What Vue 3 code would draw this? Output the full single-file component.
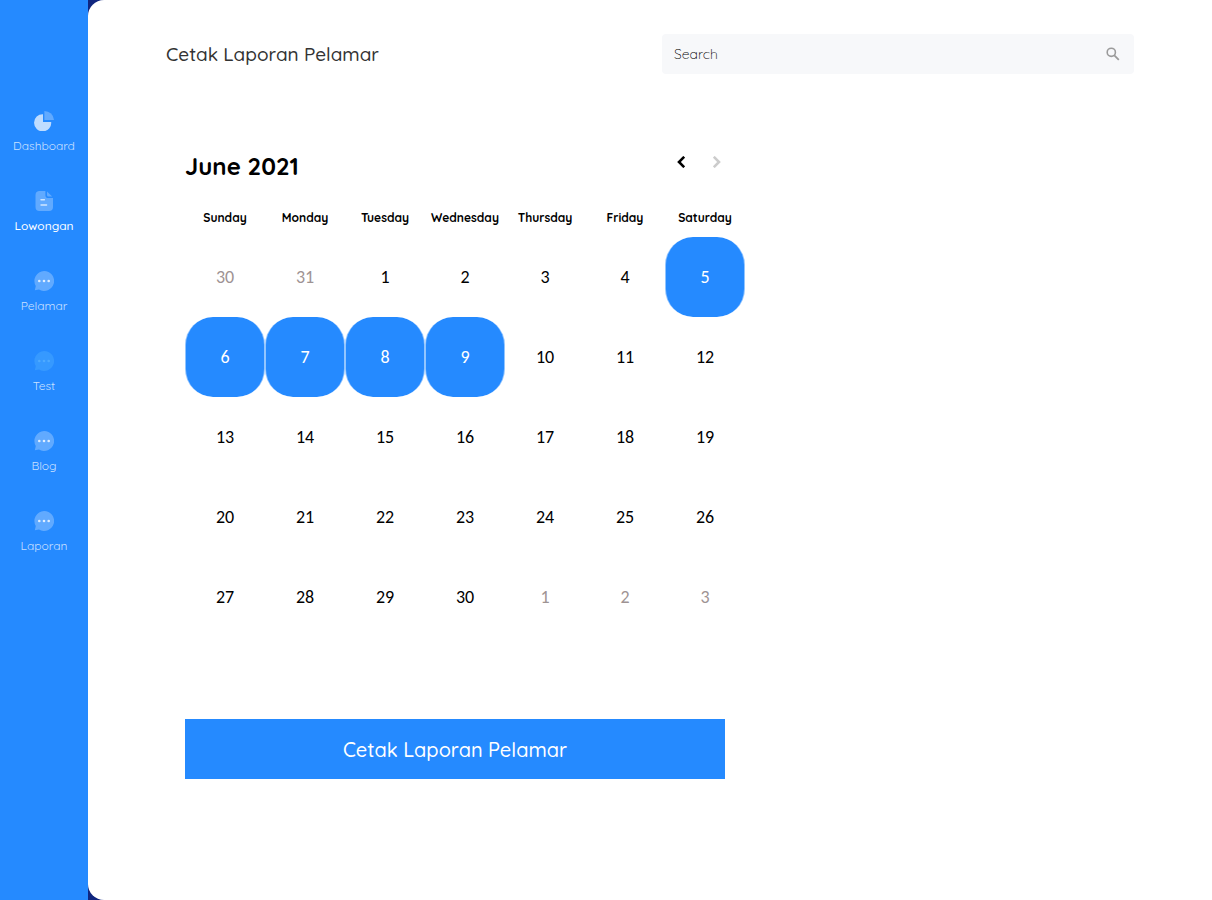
<script setup>
import { ref } from 'vue'

const search = ref('')

const navItems = [
  { label: 'Dashboard', icon: 'pie' },
  { label: 'Lowongan', icon: 'doc', active: true },
  { label: 'Pelamar', icon: 'chat' },
  { label: 'Test', icon: 'chat', faint: true },
  { label: 'Blog', icon: 'chat' },
  { label: 'Laporan', icon: 'chat' },
]

const weekdays = ['Sunday', 'Monday', 'Tuesday', 'Wednesday', 'Thursday', 'Friday', 'Saturday']

// June 2021 starts on a Tuesday; the grid runs from 30 May to 3 July.
const weeks = Array.from({ length: 5 }, (_, w) =>
  Array.from({ length: 7 }, (_, d) => {
    const date = new Date(2021, 4, 30 + w * 7 + d)
    const day = date.getDate()
    const outside = date.getMonth() !== 5
    return { day, outside, selected: !outside && day >= 5 && day <= 9 }
  })
)
</script>

<template>
  <div class="app">
    <nav class="sidebar" aria-label="Menu">
      <a
        v-for="item in navItems"
        :key="item.label"
        href="#"
        class="nav-item"
        :class="{ active: item.active }"
      >
        <svg v-if="item.icon === 'pie'" class="nav-icon" viewBox="0 0 20 20" aria-hidden="true">
          <path d="M9 3.2V11h8.2A8.6 8.6 0 1 1 9 3.2Z" fill="#fff" fill-opacity=".7" />
          <path d="M10.4 0A9.6 9.6 0 0 1 20 9h-9.6Z" fill="#fff" fill-opacity=".28" />
        </svg>
        <svg v-else-if="item.icon === 'doc'" class="nav-icon" viewBox="0 0 20 20" aria-hidden="true">
          <path
            d="M5 0h6.4v4.2A2.8 2.8 0 0 0 14.2 7H19v9a4 4 0 0 1-4 4H5.500a4 4 0 0 1-4-4V4A4 4 0 0 1 5 0Z"
            fill="#fff"
            fill-opacity=".28"
          />
          <path d="M13 0.500 18.200 5.500H14.500A1.500 1.500 0 0 1 13 4Z" fill="#fff" fill-opacity=".28" />
          <path d="M7 8.800h3.400M7 14h5.600" stroke="#fff" stroke-opacity=".7" stroke-width="1.400" stroke-linecap="round" />
        </svg>
        <svg v-else class="nav-icon" :class="{ faint: item.faint }" viewBox="0 0 20 20" aria-hidden="true">
          <path class="bubble" d="M10 0a10 10 0 1 1-5 18.600L.8 19.200l1-4.100A10 10 0 0 1 10 0Z" />
          <g class="dots">
            <circle cx="5.300" cy="10" r="1.300" />
            <circle cx="10" cy="10" r="1.300" />
            <circle cx="14.700" cy="10" r="1.300" />
          </g>
        </svg>
        <span>{{ item.label }}</span>
      </a>
    </nav>

    <main class="content">
      <header class="topbar">
        <h1>Cetak Laporan Pelamar</h1>
        <form class="search" role="search" @submit.prevent>
          <input v-model="search" type="search" placeholder="Search" aria-label="Search" />
          <button type="submit" aria-label="Submit search">
            <svg viewBox="0 0 14 14" width="14" height="14" aria-hidden="true">
              <circle cx="5.300" cy="5.300" r="4.100" fill="none" stroke="#9b9b9b" stroke-width="1.600" />
              <path d="m8.300 8.300 4.500 4.500" stroke="#9b9b9b" stroke-width="1.800" />
            </svg>
          </button>
        </form>
      </header>

      <section class="calendar" aria-label="Calendar">
        <div class="calendar-head">
          <h2>June 2021</h2>
          <div class="pager">
            <button type="button" aria-label="Previous month">
              <svg viewBox="0 0 8 12" width="8" height="12" aria-hidden="true">
                <path d="M7.200 .800 2 6l5.200 5.200" fill="none" stroke="currentColor" stroke-width="2.600" />
              </svg>
            </button>
            <button type="button" aria-label="Next month" disabled>
              <svg viewBox="0 0 8 12" width="8" height="12" aria-hidden="true">
                <path d="m.800 .800 5.200 5.200-5.200 5.200" fill="none" stroke="currentColor" stroke-width="2.600" />
              </svg>
            </button>
          </div>
        </div>

        <table>
          <thead>
            <tr>
              <th v-for="name in weekdays" :key="name" scope="col">{{ name }}</th>
            </tr>
          </thead>
          <tbody>
            <tr v-for="(week, w) in weeks" :key="w">
              <td v-for="(cell, d) in week" :key="d">
                <button
                  type="button"
                  class="day"
                  :class="{ outside: cell.outside, selected: cell.selected }"
                  :aria-pressed="cell.selected"
                >
                  {{ cell.day }}
                </button>
              </td>
            </tr>
          </tbody>
        </table>
      </section>

      <button type="button" class="print">Cetak Laporan Pelamar</button>
    </main>
  </div>
</template>

<style>
body {
  margin: 0;
}
</style>

<style scoped>
.app {
  display: flex;
  min-height: 100vh;
  background: #10267f;
  font-family: Quicksand, Lato, sans-serif;
}

button {
  padding: 0;
  border: 0;
  background: none;
  font: inherit;
  color: inherit;
  cursor: pointer;
}

.sidebar {
  display: flex;
  flex: 0 0 88px;
  flex-direction: column;
  gap: 36px;
  box-sizing: border-box;
  padding-top: 111px;
  background: #258aff;
}

.nav-item {
  display: flex;
  flex-direction: column;
  align-items: center;
  gap: 6px;
  height: 44px;
  color: rgba(255, 255, 255, 0.75);
  font-size: 12px;
  font-weight: 400;
  line-height: 18px;
  text-decoration: none;
}

.nav-item.active {
  color: #fff;
  font-weight: 500;
}

.nav-icon {
  width: 20px;
  height: 20px;
}

.bubble {
  fill: rgba(255, 255, 255, 0.28);
}

.dots {
  fill: rgba(255, 255, 255, 0.8);
}

.faint .bubble {
  fill: #3699ff;
}

.faint .dots {
  fill: #4eaaff;
}

.content {
  flex: 1;
  min-width: 0;
  box-sizing: border-box;
  padding: 34px 78px;
  border-radius: 16px 0 0 16px;
  background: #fff;
}

.topbar {
  display: flex;
  align-items: center;
  justify-content: space-between;
  gap: 24px;
}

h1 {
  margin: 0;
  color: #333;
  font-size: 19px;
  font-weight: 500;
  line-height: 40px;
}

.search {
  display: flex;
  flex: 0 1 472px;
  align-items: center;
  box-sizing: border-box;
  height: 40px;
  padding: 0 14px 0 12px;
  border-radius: 4px;
  background: #f7f8fa;
}

.search input {
  flex: 1;
  min-width: 0;
  padding: 0;
  border: 0;
  outline: 0;
  background: none;
  color: #000;
  font: 300 14px/20px Quicksand, Lato, sans-serif;
}

.search input::placeholder {
  color: #000;
  opacity: 1;
}

.search svg,
.pager svg {
  display: block;
}

.calendar {
  max-width: 560px;
  margin: 76px 0 0 19px;
}

.calendar-head {
  display: flex;
  align-items: flex-start;
  justify-content: space-between;
  padding-right: 10px;
}

h2 {
  margin: 0;
  font-size: 24px;
  font-weight: 700;
  line-height: 32px;
}

.pager {
  display: flex;
}

.pager button {
  display: grid;
  place-items: center;
  width: 36px;
  height: 24px;
}

.pager button:disabled {
  color: #ccc;
}

table {
  width: 100%;
  margin-top: 16px;
  border-collapse: collapse;
  table-layout: fixed;
}

th,
td {
  padding: 0;
}

th {
  height: 39px;
  font-size: 12px;
  font-weight: 700;
}

.day {
  display: block;
  box-sizing: border-box;
  width: 100%;
  height: 80px;
  font-family: Carlito, Lato, sans-serif;
  font-size: 18px;
}

.day.outside {
  color: #9e9393;
}

.day.selected {
  border-inline: 1px solid rgba(255, 255, 255, 0.5);
  border-radius: 28px;
  background: #258aff;
  color: #fff;
}

.print {
  display: block;
  width: 100%;
  max-width: 540px;
  height: 60px;
  margin: 82px 0 0 19px;
  background: #258aff;
  color: #fff;
  font-size: 20px;
  font-weight: 500;
}
</style>
